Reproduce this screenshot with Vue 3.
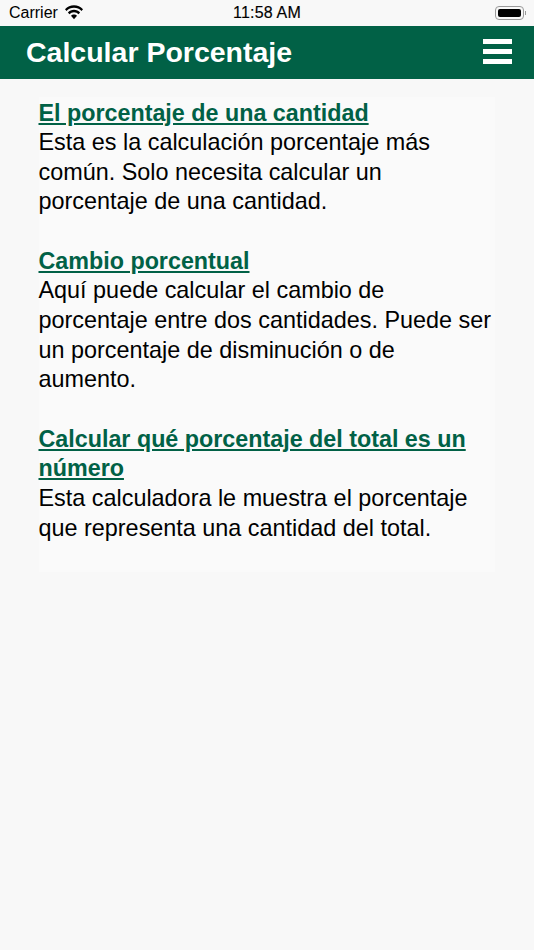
<script setup>
const sections = [
  { title: 'El porcentaje de una cantidad', text: 'Esta es la calculación porcentaje más común. Solo necesita calcular un porcentaje de una cantidad.' },
  { title: 'Cambio porcentual', text: 'Aquí puede calcular el cambio de porcentaje entre dos cantidades. Puede ser un porcentaje de disminución o de aumento.' },
  { title: 'Calcular qué porcentaje del total es un número', text: 'Esta calculadora le muestra el porcentaje que representa una cantidad del total.' }
]
</script>

<template>
  <div class="screen">
    <div class="status">
      <div class="status-left">
        <span class="carrier">Carrier</span>
        <svg class="wifi" width="20" height="15" viewBox="0 0 20 14" preserveAspectRatio="none">
          <path d="M10 2.600c2.900 0 5.500 1.100 7.500 3l1.500-1.600C16.600 1.700 13.500.300 10 .300S3.400 1.700 1 4l1.500 1.600c2-1.900 4.600-3 7.500-3z" fill="#000"/>
          <path d="M10 6.800c1.800 0 3.300.700 4.500 1.800l1.600-1.600C14.500 5.400 12.400 4.500 10 4.500S5.500 5.400 3.900 7l1.600 1.600C6.700 7.500 8.200 6.800 10 6.800z" fill="#000"/>
          <path d="M10 8.800c-1.200 0-2.200.500-3 1.200l3 3.200 3-3.200c-.800-.700-1.800-1.200-3-1.200z" fill="#000"/>
        </svg>
      </div>
      <span class="time">11:58 AM</span>
      <div class="battery"><span class="battery-fill"></span></div>
    </div>
    <header class="bar">
      <h1 class="bar-title">Calcular Porcentaje</h1>
      <div class="menu"><span></span><span></span><span></span></div>
    </header>
    <main class="panel">
      <section v-for="s in sections" :key="s.title" class="item">
        <a class="item-title">{{ s.title }}</a>
        <p class="item-text">{{ s.text }}</p>
      </section>
    </main>
  </div>
</template>

<style>
html, body { margin: 0; background: #f8f8f8; }
</style>

<style scoped>
.screen {
  width: 534px;
  height: 950px;
  background: #f8f8f8;
  font-family: "Liberation Sans", Arial, sans-serif;
  overflow: hidden;
}
.status {
  height: 26px;
  display: flex;
  align-items: center;
  justify-content: space-between;
  padding: 0 9px;
  position: relative;
  color: #000;
  font-size: 16px;
}
.status-left { display: flex; align-items: center; gap: 6px; }
.time {
  position: absolute;
  left: 0;
  right: 0;
  text-align: center;
  font-weight: 500;
  letter-spacing: 0.2px;
  -webkit-text-stroke: 0.15px #000;
  pointer-events: none;
}
.wifi { margin-top: -1px; }
.battery {
  width: 29px;
  height: 14px;
  border: 1px solid #9a9a9a;
  border-radius: 4px;
  padding: 2px;
  box-sizing: border-box;
  margin-right: 1px;
  position: relative;
  display: flex;
}
.battery::after {
  content: "";
  position: absolute;
  right: -3px;
  top: 4px;
  width: 1px;
  height: 4px;
  background: #9a9a9a;
}
.battery-fill { flex: 1; background: #000; border-radius: 2px; }
.bar {
  height: 53px;
  background: #016146;
  display: flex;
  align-items: center;
  justify-content: space-between;
  padding: 0 22px 0 26px;
}
.bar-title {
  margin: 0;
  color: #fff;
  font-size: 28.5px;
  font-weight: 700;
  line-height: 53px;
}
.menu { display: flex; flex-direction: column; gap: 5px; width: 29px; margin-top: -2px; }
.menu span { display: block; height: 5px; background: #fff; }
.panel {
  width: 456px;
  box-sizing: border-box;
  margin: 18px 0 0 39px;
  padding: 1.5px 0 0 0;
  height: 475px;
  background: #fafafa;
  display: flex;
  flex-direction: column;
  gap: 29.65px;
}
.item { display: flex; flex-direction: column; margin-left: -0.5px; }
.item-title {
  color: #016146;
  font-size: 23.3px;
  font-weight: 700;
  line-height: 29.65px;
  text-decoration: underline;
}
.item-text {
  margin: 0;
  color: #000;
  font-size: 23.4px;
  line-height: 29.65px;
}
</style>
